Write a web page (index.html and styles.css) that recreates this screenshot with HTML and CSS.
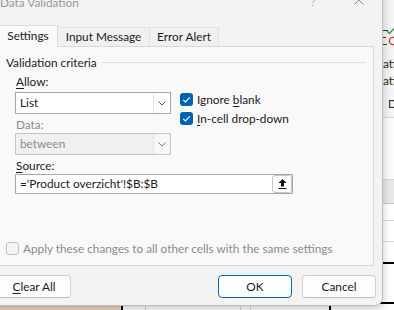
FILE: index.html
```html
<!DOCTYPE html>
<html lang="en">
<head>
<meta charset="utf-8">
<title>Data Validation</title>
<link rel="stylesheet" href="styles.css">
</head>
<body>
<div class="app">
  <div class="ribbon">
    <svg class="rb-ico" width="11" height="20" viewBox="0 0 11 20">
      <path d="M0 2.5H5M0 9.5H3M0 16.5H4" stroke="#333" stroke-width="1"/>
      <path d="M4 3L6.5 5.5L11 0.5" stroke="#2e9e3e" stroke-width="1.3" fill="none"/>
      <circle cx="10" cy="13" r="3.6" stroke="#d23c3c" stroke-width="1.4" fill="none"/>
    </svg>
    <div class="rb-t1">ation</div>
    <div class="rb-t2">ation</div>
    <div class="rb-d">D</div>
  </div>
  <div class="fbar"></div>
  <div class="colhead"></div>
  <div class="srow r1"></div>
  <div class="srow r2"></div>
  <div class="srow r3"></div>
  <div class="srow r4"></div>
  <div class="lastrow">
    <div class="cell c1"></div>
    <div class="cell c2"></div>
    <div class="cell c3"></div>
    <div class="cell c4"></div>
    <div class="cell c5"></div>
  </div>
</div>

<div class="dialog">
  <div class="titlebar">
    <span class="title">Data Validation</span>
    <span class="cap-btn help">?</span>
    <span class="cap-btn close">
      <svg width="10" height="10" viewBox="0 0 10 10"><path d="M0.5 0.5L9.5 9.5M9.5 0.5L0.5 9.5" stroke="#8c8c8c" stroke-width="1"/></svg>
    </span>
  </div>

  <div class="tabs">
    <div class="tab active tab-settings">Settings</div>
    <div class="tab tab-input">Input Message</div>
    <div class="tab tab-error">Error Alert</div>
  </div>

  <div class="panel">
    <div class="group">
      <span class="group-label">Validation criteria</span>
      <span class="group-line"></span>
    </div>

    <div class="criteria">
      <div class="col-left">
        <div class="lbl"><u>A</u>llow:</div>
        <div class="select">
          <span class="val">List</span>
          <span class="dd">
            <svg width="8" height="5" viewBox="0 0 8 5"><path d="M0.5 0.5L4 4L7.5 0.5" stroke="#5a5a5a" stroke-width="1" fill="none"/></svg>
          </span>
        </div>
        <div class="lbl lbl-data disabled">Data:</div>
        <div class="select select-disabled">
          <span class="val">between</span>
          <span class="dd">
            <svg width="8" height="5" viewBox="0 0 8 5"><path d="M0.5 0.5L4 4L7.5 0.5" stroke="#7a7a7a" stroke-width="1" fill="none"/></svg>
          </span>
        </div>
      </div>
      <div class="col-right">
        <div class="chk-row">
          <span class="box checked"><svg width="13" height="13" viewBox="0 0 13 13"><path d="M3.3 6.8L5.4 8.9L9.8 4.4" stroke="#fff" stroke-width="1.2" fill="none"/></svg></span>
          <span>Ignore <u>b</u>lank</span>
        </div>
        <div class="chk-row">
          <span class="box checked"><svg width="13" height="13" viewBox="0 0 13 13"><path d="M3.3 6.8L5.4 8.9L9.8 4.4" stroke="#fff" stroke-width="1.2" fill="none"/></svg></span>
          <span><u>I</u>n-cell drop-down</span>
        </div>
      </div>
    </div>

    <div class="source">
      <div class="lbl lbl-source"><u>S</u>ource:</div>
      <div class="src-input">
        <span class="val">='Product overzicht'!$B:$B</span>
        <span class="collapse">
          <svg width="9" height="10" viewBox="0 0 9 10"><path d="M4.5 0L8.5 4H6V7.5H3V4H0.5Z" fill="#111"/><path d="M0.5 9.5H8.5" stroke="#111" stroke-width="1"/></svg>
        </span>
      </div>
    </div>

    <div class="apply">
      <span class="box disabled-box"></span>
      <span class="disabled">Apply these changes to all other cells with the same settings</span>
    </div>
  </div>

  <div class="buttons">
    <button class="btn btn-clear"><u>C</u>lear All</button>
    <span class="spacer"></span>
    <button class="btn btn-ok">OK</button>
    <button class="btn btn-cancel">Cancel</button>
  </div>
</div>
</body>
</html>
```
FILE: styles.css
```css
* { box-sizing: border-box; }
html, body { margin: 0; padding: 0; }
body {
  width: 394px;
  height: 310px;
  overflow: hidden;
  position: relative;
  background: #ffffff;
  font-family: Lato, "Liberation Sans", sans-serif;
  font-size: 11.8px;
  line-height: 15px;
  color: #1b1b1b;
}
u { text-decoration: underline; text-underline-offset: 2px; text-decoration-thickness: 1px; }

/* ---------- background application ---------- */
.app { width: 394px; height: 310px; display: flex; flex-direction: column; }
.ribbon {
  height: 118px;
  flex: none;
  background: #f5f5f5;
  border-bottom: 1px solid #d8d8d8;
  padding: 28px 0 0 383px;
  display: flex;
  flex-direction: column;
  color: #262626;
  white-space: nowrap;
}
.rb-ico { display: block; flex: none; }
.rb-t1 { margin-top: 8px; }
.rb-t2 { margin-top: 2px; }
.rb-d { margin-top: 8px; padding-left: 5px; }
.fbar { height: 62px; flex: none; background: #fbfbfb; border-bottom: 1px solid #d4d4d4; }
.colhead { height: 24px; flex: none; background: #e8e8e8; border-bottom: 1px solid #c6c6c6; }
.srow { flex: none; background: #fff; border-bottom: 1px solid #dadada; }
.r1 { height: 17px; }
.r2 { height: 21px; }
.r3 { height: 22px; border-bottom: 2px solid #000; }
.r4 { height: 40px; border-bottom: 2px solid #000; }
.lastrow { flex: 1; display: flex; }
.cell { height: 100%; border-right: 1px solid #d9d9d9; }
.c1 { width: 123px; background: #efd6bf; border-right: 2px solid #000; }
.c2 { width: 23px; }
.c3 { width: 95px; }
.c4 { width: 10px; }
.c5 { width: 80px; border-right: 2px solid #000; }

/* ---------- dialog window ---------- */
.dialog {
  position: absolute;
  left: -11px;
  top: -20px;
  width: 394px;
  height: 326px;
  background: #f3f3f3;
  border: 1px solid #bdbdbd;
  border-radius: 8px;
  box-shadow: 0 3px 10px rgba(0, 0, 0, 0.22);
  display: flex;
  flex-direction: column;
}
.titlebar { height: 44px; flex: none; display: flex; align-items: flex-start; }
.title { flex: 1; padding: 14px 0 0 10px; color: #9a9a9a; }
.cap-btn { width: 46px; display: flex; justify-content: center; color: #8c8c8c; }
.help { padding-top: 13px; font-weight: 300; font-size: 12px; }
.close { padding-top: 14px; }
.close svg { display: block; }

.tabs {
  height: 21px;
  flex: none;
  display: flex;
  align-items: flex-end;
  margin-left: 8px;
  position: relative;
  z-index: 1;
}
.tab {
  height: 19px;
  background: #f0f0f0;
  border: 1px solid #e2e2e2;
  border-bottom: 0;
  border-left: 0;
  text-align: center;
  line-height: 15px;
  padding-top: 1px;
  color: #1b1b1b;
}
.tab.active {
  height: 22px;
  background: #f9f9f9;
  border: 1px solid #d9d9d9;
  border-bottom: 0;
  margin-bottom: -1px;
  padding-top: 2px;
}
.tab-settings { width: 60px; }
.tab-input { width: 92px; }
.tab-error { width: 69px; }

.panel {
  height: 220px;
  flex: none;
  margin: 0 8px;
  background: #f9f9f9;
  border: 1px solid #d9d9d9;
  padding: 8px 7px 9px 7px;
  display: flex;
  flex-direction: column;
}
.group { display: flex; align-items: center; gap: 4px; height: 15px; }
.group-line { flex: 1; height: 1px; background: #dddddd; }

.criteria { display: flex; gap: 9px; margin: 4px 0 0 9px; }
.col-left { width: 156px; display: flex; flex-direction: column; }
.lbl { height: 15px; padding-left: 1px; }
.lbl-data { margin-top: 3px; }
.disabled { color: #8b8b8b; }
.select {
  height: 22px;
  margin-top: 3px;
  border: 1px solid #a6a6a6;
  background: #ffffff;
  display: flex;
}
.select-disabled { margin-top: 1px; border-color: #c4c4c4; background: #f0f0f0; color: #8b8b8b; }
.select .val { flex: 1; padding-left: 4px; line-height: 20px; }
.dd {
  width: 17px;
  border-left: 1px solid #e4e4e4;
  background: #ffffff;
  display: flex;
  align-items: center;
  justify-content: center;
}
.select-disabled .dd { background: #f7f7f7; }
.dd svg { display: block; }

.col-right { margin-top: 18px; display: flex; flex-direction: column; gap: 4px; }
.chk-row { display: flex; align-items: center; gap: 4px; height: 15px; }
.box { width: 13px; height: 13px; flex: none; border-radius: 3px; display: block; }
.box svg { display: block; }
.checked { background: #0063b8; }
.disabled-box { border: 1px solid #c3c3c3; background: #f4f4f4; }

.source { margin: 3px 0 0 9px; }
.src-input {
  width: 278px;
  height: 20px;
  margin-top: 1px;
  border: 1px solid #a6a6a6;
  background: #ffffff;
  display: flex;
}
.src-input .val { flex: 1; padding-left: 4px; line-height: 18px; }
.collapse {
  width: 20px;
  height: 18px;
  border: 1px solid #c6c6c6;
  border-radius: 3px;
  background: #ffffff;
  display: flex;
  align-items: center;
  justify-content: center;
}
.collapse svg { display: block; }

.apply { margin-top: auto; display: flex; align-items: center; gap: 4px; height: 15px; }

.buttons { height: 23px; flex: none; margin: 9px 6px 0 7px; display: flex; }
.spacer { flex: 1; }
.btn {
  width: 74px;
  height: 23px;
  padding: 0;
  font: inherit;
  line-height: 21px;
  color: #1b1b1b;
  background: #fdfdfd;
  border: 1px solid #d0d0d0;
  border-bottom-color: #bdbdbd;
  border-radius: 4px;
}
.btn-ok { border-color: #0067c0; }
.btn-cancel { margin-left: 10px; }
```
